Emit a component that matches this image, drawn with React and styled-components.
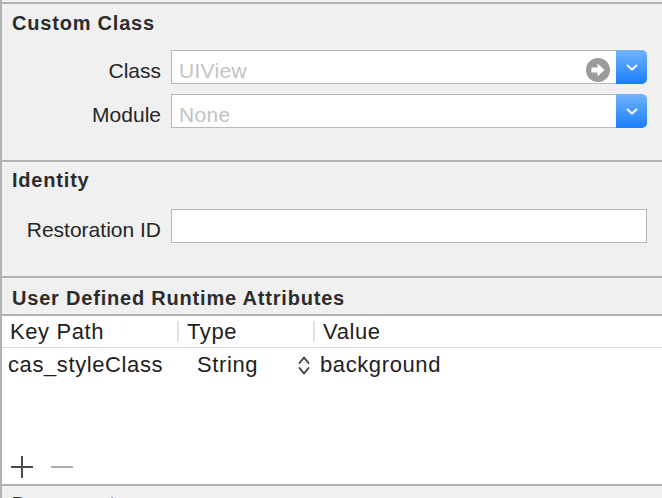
import React from 'react';
import styled, { createGlobalStyle } from 'styled-components';

const Global = createGlobalStyle`
  html, body {
    margin: 0;
    padding: 0;
    background: #f0f0f0;
    overflow: hidden;
  }
  #root {
    width: 662px;
    height: 498px;
  }
`;

const Panel = styled.div`
  width: 662px;
  height: 498px;
  box-sizing: border-box;
  padding-top: 2px;
  border-left: 2px solid #b1b1b1;
  background: #f0f0f0;
  font-family: 'Liberation Sans', Arial, sans-serif;
  overflow: hidden;
  display: flex;
  flex-direction: column;
`;

const Section = styled.section`
  border-top: 2px solid #b3b3b3;
  padding: ${(p) => p.$pad || '0'};
  flex-shrink: 0;
`;

const HeadRow = styled.div`
  display: flex;
  justify-content: space-between;
  align-items: baseline;
  padding: ${(p) => p.$pad || '0'};
`;

const Heading = styled.h2`
  margin: 0;
  padding-left: 10px;
  font-size: 20px;
  line-height: 24px;
  font-weight: 700;
  color: #2c2c2c;
  letter-spacing: 0.8px;
`;

const HideLink = styled.span`
  padding-right: 22px;
  font-size: 18px;
  line-height: 24px;
  font-weight: 700;
  color: #8ea4c2;
`;

const Form = styled.div`
  display: grid;
  grid-template-columns: 159px 1fr;
  column-gap: 10px;
  row-gap: 10px;
  padding-right: 15px;
  margin-top: ${(p) => p.$top}px;
`;

const Label = styled.div`
  text-align: right;
  padding-top: 9px;
  font-size: 21px;
  line-height: 24px;
  color: #262626;
`;

const Field = styled.div`
  display: flex;
  height: 34px;
`;

const FieldBox = styled.div`
  flex: 1;
  display: flex;
  align-items: flex-start;
  box-sizing: border-box;
  padding: 8px 6px 0 7px;
  background: #fff;
  border: 1px solid #b9b9b9;
  border-right: ${(p) => (p.$attached ? 'none' : '1px solid #b9b9b9')};
  font-size: 21px;
  line-height: 24px;
  letter-spacing: 0.3px;
  color: #c3c3c3;
`;

const GoIcon = styled.svg`
  margin-left: auto;
  margin-top: -1px;
  flex-shrink: 0;
`;

const DropButton = styled.div`
  width: 31px;
  display: flex;
  align-items: center;
  justify-content: center;
  border-radius: 0 5px 5px 0;
  background: linear-gradient(#72b3fc, #1a7ffb);
`;

const AttrHead = styled.div`
  padding: 8px 0 4px;
`;

const Table = styled.div`
  height: 168px;
  border-top: 2px solid #b3b3b3;
  background: #fff;
  display: flex;
  flex-direction: column;
  font-size: 22px;
  letter-spacing: 0.6px;
  color: #1e1e1e;
`;

const HeaderRow = styled.div`
  display: grid;
  grid-template-columns: 175px 136px 1fr;
  align-items: center;
  height: 31px;
  border-bottom: 1px solid #d9d9d9;
`;

const HeaderCell = styled.div`
  height: 21px;
  line-height: 21px;
  padding-left: 8px;
  border-left: ${(p) => (p.$divider ? '2px solid #e3e3e3' : 'none')};
`;

const DataRow = styled.div`
  display: grid;
  grid-template-columns: 175px 136px 1fr;
  align-items: center;
  height: 34px;
  line-height: 24px;
`;

const Cell = styled.div`
  display: flex;
  align-items: center;
  justify-content: space-between;
  padding-left: ${(p) => p.$left}px;
  padding-right: ${(p) => p.$right || 0}px;
`;

const TableFooter = styled.div`
  margin-top: auto;
  display: flex;
  gap: 18px;
  padding: 0 0 6px 9px;
`;

const Chevron = () => (
  <svg width="12" height="7" viewBox="0 0 12 7">
    <path d="M1.5 1.5 L6 5.5 L10.5 1.5" fill="none" stroke="#fff" strokeWidth="2" strokeLinecap="round" strokeLinejoin="round" />
  </svg>
);

const Stepper = () => (
  <svg width="12" height="21" viewBox="0 0 12 21">
    <path d="M1.5 8 L6 2.5 L10.5 8" fill="none" stroke="#3a3a3a" strokeWidth="1.8" strokeLinecap="round" strokeLinejoin="round" />
    <path d="M1.5 13 L6 18.5 L10.5 13" fill="none" stroke="#3a3a3a" strokeWidth="1.8" strokeLinecap="round" strokeLinejoin="round" />
  </svg>
);

const App = () => {
  return (
    <>
      <Global />
      <Panel>
        <Section $pad="7px 0 32px">
          <Heading>Custom Class</Heading>
          <Form $top={15}>
            <Label>Class</Label>
            <Field>
              <FieldBox $attached>
                UIView
                <GoIcon width="24" height="24" viewBox="0 0 24 24">
                  <circle cx="12" cy="12" r="12" fill="#9b9b9b" />
                  <path d="M5.5 9.5 H11.5 V5.5 L18.5 12 L11.5 18.5 V14.5 H5.5 Z" fill="#fff" />
                </GoIcon>
              </FieldBox>
              <DropButton>
                <Chevron />
              </DropButton>
            </Field>
            <Label>Module</Label>
            <Field>
              <FieldBox $attached>None</FieldBox>
              <DropButton>
                <Chevron />
              </DropButton>
            </Field>
          </Form>
        </Section>

        <Section $pad="6px 0 33px">
          <Heading>Identity</Heading>
          <Form $top={17}>
            <Label>Restoration ID</Label>
            <Field>
              <FieldBox />
            </Field>
          </Form>
        </Section>

        <Section>
          <AttrHead>
            <Heading>User Defined Runtime Attributes</Heading>
          </AttrHead>
          <Table>
            <HeaderRow>
              <HeaderCell>Key Path</HeaderCell>
              <HeaderCell $divider>Type</HeaderCell>
              <HeaderCell $divider>Value</HeaderCell>
            </HeaderRow>
            <DataRow>
              <Cell $left={6}>cas_styleClass</Cell>
              <Cell $left={20} $right={3}>
                String
                <Stepper />
              </Cell>
              <Cell $left={7}>background</Cell>
            </DataRow>
            <TableFooter>
              <svg width="22" height="22" viewBox="0 0 22 22">
                <path d="M11 0 V22 M0 11 H22" stroke="#4a4a4a" strokeWidth="2" />
              </svg>
              <svg width="22" height="22" viewBox="0 0 22 22">
                <path d="M0 11 H22" stroke="#ababab" strokeWidth="2" />
              </svg>
            </TableFooter>
          </Table>
        </Section>

        <Section>
          <HeadRow $pad="6px 0 0">
            <Heading>Document</Heading>
            <HideLink>Hide</HideLink>
          </HeadRow>
        </Section>
      </Panel>
    </>
  );
};

export default App;
